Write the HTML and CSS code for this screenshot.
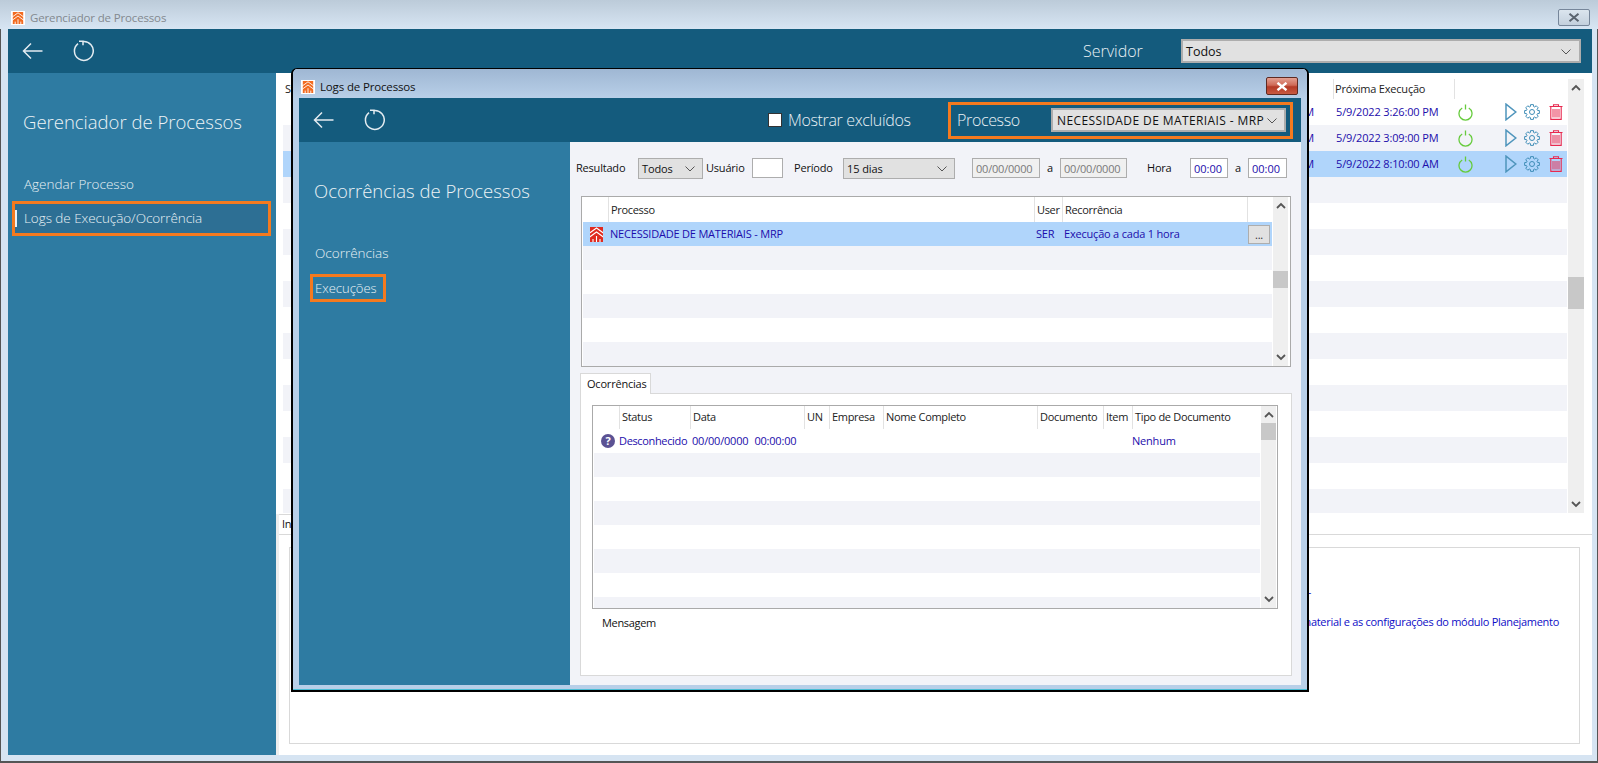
FILE: index.html
```html
<!DOCTYPE html>
<html lang="pt">
<head>
<meta charset="utf-8">
<title>Gerenciador de Processos</title>
<link rel="stylesheet" href="styles.css">
</head>
<body>
<svg class="defs" width="0" height="0" aria-hidden="true">
  <symbol id="logo" viewBox="0 0 13 15"><rect class="logo-bg" width="13" height="15"/><path class="logo-line" d="M-1 6.5L6.5 1L14 6.5M-1 10.5L6.5 5L14 10.5M6.5 9V15M3 12V15M10 12V15"/></symbol>
  <symbol id="back" viewBox="0 0 21 20"><path d="M20.5 10H1.5M9 2.5L1.5 10L9 17.5"/></symbol>
  <symbol id="reload" viewBox="0 0 22 22"><path d="M6 3.6A9.4 9.4 0 1 0 11 1.6M7 1.2H11V5.2"/></symbol>
  <symbol id="chev" viewBox="0 0 10 6"><path d="M.5 .5L5 5L9.5 .5"/></symbol>
  <symbol id="up" viewBox="0 0 10 7"><path d="M1 6L5 2L9 6"/></symbol>
  <symbol id="down" viewBox="0 0 10 7"><path d="M1 1L5 5L9 1"/></symbol>
  <symbol id="power" viewBox="0 0 15 17"><path d="M4.2 4A6.5 6.5 0 1 0 10.8 4M7.5 .5V5.5"/></symbol>
  <symbol id="play" viewBox="0 0 12 18"><path d="M1 1.2L10.8 9L1 16.8Z"/></symbol>
  <symbol id="gear" viewBox="0 0 16 16"><path d="M13.45 6.33L15.36 6.57V9.43L13.45 9.67L13.03 10.68L14.19 12.19L12.19 14.22L10.68 13.03L9.67 13.45L9.43 15.36H6.57L6.33 13.45L5.32 13.03L3.81 14.22L1.78 12.19L2.97 10.68L2.55 9.67L.64 9.43V6.57L2.55 6.33L2.97 5.32L1.78 3.81L3.81 1.78L5.32 2.97L6.33 2.55L6.57 .64H9.43L9.67 2.55L10.68 2.97L12.19 1.78L14.22 3.81L13.03 5.32ZM10.5 8A2.5 2.5 0 1 0 5.5 8A2.5 2.5 0 1 0 10.5 8Z"/></symbol>
  <symbol id="trash" viewBox="0 0 14 16"><rect class="trash-fill" x="3" y="5" width="8" height="8.5"/><path d="M.5 2.5H13.5M4.5 2.5V.7H9.5V2.5M1.8 2.5V15.4H12.2V2.5"/></symbol>
  <symbol id="x" viewBox="0 0 12 9"><path d="M1.5 .8L10.5 8.2M10.5 .8L1.5 8.2"/></symbol>
</svg>

<div class="win">
  <div class="titlebar">
    <svg class="app-icon"><use href="#logo"/></svg>
    <span class="title-muted">Gerenciador de Processos</span>
    <span class="close close-idle"><svg class="close-x"><use href="#x"/></svg></span>
  </div>
  <div class="topbar">
    <svg class="ic-back"><use href="#back"/></svg>
    <svg class="ic-reload"><use href="#reload"/></svg>
    <span class="bar-label servidor">Servidor</span>
    <div class="select select-server">Todos<svg class="chev"><use href="#chev"/></svg></div>
  </div>
  <div class="main">
    <nav class="side">
      <h1 class="side-title">Gerenciador de Processos</h1>
      <a class="nav-item">Agendar Processo</a>
      <a class="nav-item nav-active"><i class="nav-bar"></i>Logs de Execução/Ocorrência</a>
    </nav>
    <section class="content">
      <div class="sched">
        <div class="sched-table">
          <div class="sched-row sched-head">
            <span class="sc-first">Status</span>
            <span class="sc-next">Próxima Execução</span>
            <span class="sc-act"></span>
          </div>
          <div class="sched-row">
            <span class="sc-first sc-val">PM</span>
            <span class="sc-next sc-val">5/9/2022 3:26:00 PM</span>
            <span class="sc-act"><svg class="ic-power"><use href="#power"/></svg><svg class="ic-play"><use href="#play"/></svg><svg class="ic-gear"><use href="#gear"/></svg><svg class="ic-trash"><use href="#trash"/></svg></span>
          </div>
          <div class="sched-row alt">
            <span class="sc-first sc-val">PM</span>
            <span class="sc-next sc-val">5/9/2022 3:09:00 PM</span>
            <span class="sc-act"><svg class="ic-power"><use href="#power"/></svg><svg class="ic-play"><use href="#play"/></svg><svg class="ic-gear"><use href="#gear"/></svg><svg class="ic-trash"><use href="#trash"/></svg></span>
          </div>
          <div class="sched-row sel">
            <span class="sc-first sc-val">AM</span>
            <span class="sc-next sc-val">5/9/2022 8:10:00 AM</span>
            <span class="sc-act"><svg class="ic-power"><use href="#power"/></svg><svg class="ic-play"><use href="#play"/></svg><svg class="ic-gear"><use href="#gear"/></svg><svg class="ic-trash"><use href="#trash"/></svg></span>
          </div>
          <div class="sched-row alt"></div><div class="sched-row"></div>
          <div class="sched-row alt"></div><div class="sched-row"></div>
          <div class="sched-row alt"></div><div class="sched-row"></div>
          <div class="sched-row alt"></div><div class="sched-row"></div>
          <div class="sched-row alt"></div><div class="sched-row"></div>
          <div class="sched-row alt"></div><div class="sched-row"></div>
          <div class="sched-row alt"></div>
        </div>
        <div class="scroll scroll-sched">
          <svg class="sc-arrow"><use href="#up"/></svg>
          <i class="thumb thumb-sched"></i>
          <svg class="sc-arrow"><use href="#down"/></svg>
        </div>
      </div>
      <div class="info">
        <div class="info-tabs"><span class="info-tab">Informações</span></div>
        <div class="info-panel">
          <div class="info-box">
            <p class="info-line info-line-a">Necessidade de Materiais -</p>
            <p class="info-line info-line-b">Processo que calcula a necessidade de material e as configurações do módulo Planejamento</p>
          </div>
        </div>
      </div>
    </section>
  </div>
</div>

<div class="dialog">
  <div class="titlebar dialog-title">
    <svg class="app-icon"><use href="#logo"/></svg>
    <span>Logs de Processos</span>
    <span class="close close-red"><svg class="close-x"><use href="#x"/></svg></span>
  </div>
  <div class="topbar dialog-bar">
    <svg class="ic-back"><use href="#back"/></svg>
    <svg class="ic-reload"><use href="#reload"/></svg>
    <i class="checkbox"></i>
    <span class="bar-label excl">Mostrar excluídos</span>
    <div class="proc-box">
      <span class="bar-label">Processo</span>
      <div class="select select-proc">NECESSIDADE DE MATERIAIS - MRP<svg class="chev"><use href="#chev"/></svg></div>
    </div>
  </div>
  <div class="main">
    <nav class="side side-dialog">
      <h2 class="side-title">Ocorrências de Processos</h2>
      <a class="nav-item">Ocorrências</a>
      <a class="nav-item nav-boxed">Execuções</a>
    </nav>
    <section class="logs">
      <div class="filters">
        <span class="f-label w62">Resultado</span>
        <div class="select sel-sm w65">Todos<svg class="chev"><use href="#chev"/></svg></div>
        <span class="f-label ml3 w46">Usuário</span>
        <span class="field w31"></span>
        <span class="f-label ml11 w49">Período</span>
        <div class="select sel-sm w112">15 dias<svg class="chev"><use href="#chev"/></svg></div>
        <span class="field field-off ml17 w68">00/00/0000</span>
        <span class="f-label ml7 w13">a</span>
        <span class="field field-off w67">00/00/0000</span>
        <span class="f-label ml20 w43">Hora</span>
        <span class="field field-time w38">00:00</span>
        <span class="f-label ml7 w13">a</span>
        <span class="field field-time w39">00:00</span>
      </div>

      <div class="grid grid-proc">
        <div class="grid-table">
          <div class="grow ghead cols-proc">
            <span></span><span>Processo</span><span>User</span><span>Recorrência</span><span></span>
          </div>
          <div class="grow sel cols-proc">
            <span class="cell-icon"><svg class="ic-red"><use href="#logo"/></svg></span>
            <span>NECESSIDADE DE MATERIAIS - MRP</span><span>SER</span><span>Execução a cada 1 hora</span>
            <span class="cell-btn"><b class="dots">...</b></span>
          </div>
          <div class="grow alt"></div><div class="grow"></div>
          <div class="grow alt"></div><div class="grow"></div>
          <div class="grow alt"></div>
        </div>
        <div class="scroll">
          <svg class="sc-arrow"><use href="#up"/></svg>
          <i class="thumb thumb-proc"></i>
          <svg class="sc-arrow"><use href="#down"/></svg>
        </div>
      </div>

      <div class="tabs"><span class="tab">Ocorrências</span></div>
      <div class="tab-panel">
        <div class="grid grid-occ">
          <div class="grid-table">
            <div class="grow ghead ghead-occ cols-occ">
              <span></span><span>Status</span><span>Data</span><span>UN</span><span>Empresa</span><span>Nome Completo</span><span>Documento</span><span>Item</span><span>Tipo de Documento</span>
            </div>
            <div class="grow cols-occ">
              <span class="cell-icon"><b class="help">?</b></span>
              <span class="cell-status">Desconhecido</span>
              <span class="cell-date">00/00/0000<em class="time">00:00:00</em></span>
              <span></span><span></span><span></span><span></span><span></span>
              <span>Nenhum</span>
            </div>
            <div class="grow alt"></div><div class="grow"></div>
            <div class="grow alt"></div><div class="grow"></div>
            <div class="grow alt"></div><div class="grow"></div>
            <div class="grow alt"></div>
          </div>
          <div class="scroll">
            <svg class="sc-arrow"><use href="#up"/></svg>
            <i class="thumb thumb-occ"></i>
            <svg class="sc-arrow"><use href="#down"/></svg>
          </div>
        </div>
        <div class="msg">Mensagem</div>
      </div>
    </section>
  </div>
</div>
</body>
</html>
```
FILE: styles.css
```css
* { box-sizing: border-box; }
html, body { margin: 0; width: 1598px; height: 763px; overflow: hidden; }
body { position: relative; font: 11px/16px "Open Sans", "Liberation Sans", sans-serif; letter-spacing: -.2px; color: #111; background: #fff; }
p, h1, h2 { margin: 0; font-weight: 300; }
.defs { position: absolute; }

/* shared icon strokes */
.ic-back, .ic-reload { fill: none; stroke: #e4ecf1; stroke-width: 1.5; flex: none; }
.ic-back { width: 21px; height: 20px; margin-left: 14px; }
.ic-reload { width: 22px; height: 22px; margin-left: 29px; }
.chev { width: 10px; height: 6px; fill: none; stroke: #555; stroke-width: 1; margin-left: auto; flex: none; }

/* outer window */
.win { width: 1598px; height: 763px; display: flex; flex-direction: column; padding: 0 6px 8px 8px; position: relative;
  background: #d6e4f2; box-shadow: inset 1px 0 #555, inset -1px 0 #555, inset 0 -2px #555; }
.titlebar { height: 29px; flex: none; margin: 0 -6px 0 -8px; padding: 6px 8px 0 11px; display: flex; align-items: center;
  background: linear-gradient(#bccbd9, #d7e5f3); font-size: 11.5px; letter-spacing: -.15px; position: relative; }
.app-icon { width: 14px; height: 14px; margin-right: 5px; background: #fff; padding: 1px; color: #f26b21; flex: none; }
.logo-bg { fill: currentColor; }
.logo-line { fill: none; stroke: #fff; stroke-width: 1.1; }
.title-muted { color: #83898f; }
.close { margin-left: auto; display: flex; align-items: center; justify-content: center; width: 32px; height: 17px; border-radius: 2px; flex: none; }
.close-idle { background: linear-gradient(#dbe5ee, #c3d0dd); border: 1px solid #76869a; }
.close-red { background: linear-gradient(#e3a092 0, #cf6a57 45%, #b43a26 55%, #c85b42 100%); border: 1px solid #5e2a22; margin-right: 1px; margin-top: -2px; height: 18px; }
.close-x { width: 12px; height: 9px; fill: none; stroke: #fff; stroke-width: 2.4; }
.close-idle .close-x { stroke: #59636e; stroke-width: 2; }

.topbar { height: 44px; flex: none; background: #145b7d; display: flex; align-items: center; }
.bar-label { color: #e9f1f5; font-size: 16px; line-height: 22px; font-weight: 300; white-space: nowrap; letter-spacing: -.35px; }
.servidor { margin-left: auto; width: 98px; letter-spacing: 0; }
.select { background: #e1e1e1; border: 1px solid #adadad; display: flex; align-items: center; font-size: 12.5px; letter-spacing: 0; color: #111; white-space: nowrap; }
.select-server { width: 400px; height: 24px; padding: 1px 8px 0 3px; margin-right: 11px; border-width: 2px; }

.main { flex: 1; display: flex; min-height: 0; }
.side { width: 268px; flex: none; background: #2e7ba2; padding-top: 36px; color: #e9f1f5; }
.side-title { font-size: 18.5px; line-height: 26px; letter-spacing: 0; margin: 0 0 39px 15px; color: #edf3f6; white-space: nowrap; }
.nav-item { display: flex; align-items: center; height: 20px; padding-left: 16px; font-size: 13.5px; line-height: 20px; letter-spacing: 0; font-weight: 300; white-space: nowrap; }
.nav-active { height: 35px; width: 259px; margin: 7px 0 0 4px; padding: 0 0 1px; border: 3px solid #f47a1f; background: #2d6f94; letter-spacing: -.06px; }
.nav-bar { width: 2px; height: 17px; background: #e9f1f5; margin-right: 7px; }

/* schedule list */
.content { flex: 1; background: #fff; display: flex; flex-direction: column; padding-top: 6px; min-width: 0; }
.sched { height: 434px; flex: none; display: flex; margin: 0 8px 0 7px; }
.sched-table { flex: 1; height: 434px; overflow: hidden; }
.sched-row { height: 26px; display: grid; grid-template-columns: 1050px 121px 113px; align-items: center; }
.sched-head { height: 20px; color: #222; }
.sched-head .sc-next, .sched-head .sc-act { border-left: 1px solid #e2e2e2; height: 20px; line-height: 20px; padding-left: 1px; }
.sc-first { padding-left: 2px; }
.sc-val { color: #1c0dab; white-space: nowrap; letter-spacing: -.15px; }
.sc-first.sc-val { text-align: right; padding-right: 19px; }
.sc-next.sc-val { padding-left: 3px; }
.sc-act { display: flex; align-items: center; }
.alt { background: #f2f3f8; }
.sel { background: #b0d5fb; }
.ic-power { width: 15px; height: 17px; margin-left: 4px; fill: none; stroke: #66cb3c; stroke-width: 1.3; }
.ic-play { width: 12px; height: 18px; margin-left: 32px; fill: none; stroke: #4f95bc; stroke-width: 1.5; }
.ic-gear { width: 16px; height: 16px; margin-left: 7px; fill: none; stroke: #3f8db7; stroke-width: 1; }
.ic-trash { width: 14px; height: 16px; margin-left: 9px; fill: none; stroke: #e8294f; stroke-width: 1.1; }
.trash-fill { fill: #e8294f; fill-opacity: .5; stroke: none; }

.scroll { width: 15px; flex: none; background: #efefef; margin-left: 1px; display: flex; flex-direction: column; align-items: center; }
.scroll-sched { width: 16px; }
.sc-arrow { width: 10px; height: 7px; fill: none; stroke: #555; stroke-width: 1.8; margin: 5px 0 4px; flex: none; }
.thumb { display: block; width: 100%; flex: none; background: #c8c8c8; }
.scroll .sc-arrow:last-child { margin: auto 0 5px; }
.thumb-sched { height: 32px; margin-top: 182px; }
.thumb-proc { height: 17px; margin-top: 58px; }
.thumb-occ { height: 17px; margin-top: 1px; }

/* lower information panel */
.info { flex: 1; display: flex; flex-direction: column; margin-top: 1px; border-left: 3px solid #eee; min-height: 0; }
.info-tabs { height: 21px; flex: none; border-bottom: 1px solid #d9d9d9; }
.info-tab { display: block; width: 100px; height: 20px; border-top: 1px solid #d9d9d9; padding-left: 3px; line-height: 17px; }
.info-panel { flex: 1; padding: 12px 12px 11px 10px; min-height: 0; }
.info-box { height: 100%; border: 1px solid #d9d9d9; padding-top: 36px; color: #0d0dc6; }
.info-line { font-weight: 400; text-align: right; white-space: nowrap; line-height: 16px; letter-spacing: -.3px; }
.info-line-a { padding-right: 268px; }
.info-line-b { padding-right: 20px; margin-top: 14px; }

/* dialog window floating over the main window */
.dialog { position: absolute; left: 291px; top: 68px; width: 1018px; height: 624px; display: flex; flex-direction: column;
  padding: 0 6px 5px; border: 2px solid #000; border-top-width: 1px; border-radius: 6px 6px 0 0;
  background: #b8cfe8; box-shadow: inset 0 -1px #49bcd4; }
.dialog-title { margin: 0 -6px; padding: 7px 8px 0 8px; background: linear-gradient(#9fb7d3, #b8cfe8); border-radius: 5px 5px 0 0; color: #111; }
.checkbox { width: 14px; height: 14px; background: #fff; border: 1px solid #333; margin-left: 383px; margin-right: 6px; flex: none; }
.excl { width: 160px; }
.proc-box { width: 345px; height: 37px; border: 3px solid #f47a1f; display: flex; align-items: center; padding: 0 4px 0 6px; flex: none; }
.proc-box .bar-label { width: 94px; flex: none; }
.select-proc { flex: 1; height: 24px; padding: 1px 7px 0 4px; font-size: 12px; letter-spacing: .4px; border-width: 2px; }
.side-dialog { width: 271px; padding-top: 36px; }
.side-dialog .side-title { margin-bottom: 39px; }
.nav-boxed { height: 28px; width: 76px; margin: 11px 0 0 11px; padding: 0 0 1px 2px; border: 3px solid #f47a1f; font-size: 13px; }

.logs { flex: 1; background: #f2f3f8; padding-top: 16px; display: flex; flex-direction: column; min-width: 0; }
.filters { height: 21px; flex: none; display: flex; align-items: flex-start; padding-left: 6px; }
.f-label { line-height: 20px; white-space: nowrap; flex: none; }
.sel-sm { height: 21px; padding: 1px 7px 0 3px; flex: none; font-size: 11px; letter-spacing: -.1px; }
.field { height: 20px; background: #fff; border: 1px solid #adadad; flex: none; line-height: 19px; white-space: nowrap; padding-left: 3px; color: #1c0dab; }
.field-off { background: #f0f0f0; color: #7a7a7a; }
.field-time { padding-left: 3px; letter-spacing: 0; }
.w13 { width: 13px; } .w31 { width: 31px; } .w38 { width: 38px; } .w39 { width: 39px; } .w43 { width: 43px; } .w46 { width: 46px; }
.w49 { width: 49px; } .w62 { width: 62px; } .w65 { width: 65px; } .w67 { width: 67px; } .w68 { width: 68px; } .w112 { width: 112px; }
.ml3 { margin-left: 3px; } .ml7 { margin-left: 7px; } .ml11 { margin-left: 11px; } .ml17 { margin-left: 17px; } .ml20 { margin-left: 20px; }

.grid { display: flex; border: 1px solid #aaa; background: #fff; flex: none; }
.grid-proc { width: 710px; height: 171px; margin: 17px 0 0 11px; padding: 0 2px 0 1px; }
.grid-occ { width: 686px; height: 204px; padding: 0 1px 0 1px; }
.grid-table { flex: 1; overflow: hidden; min-width: 0; }
.grow { height: 24px; display: grid; align-items: center; color: #1c0dab; white-space: nowrap; }
.grow > span { padding-left: 2px; min-width: 0; }
.ghead { height: 25px; color: #222; letter-spacing: -.32px; }
.ghead-occ { height: 23px; }
.ghead > span { height: 100%; line-height: 25px; border-left: 1px solid #e2e2e2; padding-left: 2px; }
.ghead-occ > span { line-height: 22px; }
.ghead > span:first-child { border-left: 0; }
.cols-proc { grid-template-columns: 25px 426px 28px 185px 25px; }
.cols-occ { grid-template-columns: 25px 71px 114px 25px 54px 154px 66px 29px 129px; }
.cols-occ:not(.ghead) > span { padding-left: 0; }
.cell-icon { display: flex; align-items: center; padding-left: 7px !important; }
.ic-red { width: 13px; height: 15px; color: #e02b20; }
.cell-btn { padding-left: 1px !important; }
.dots { display: block; width: 22px; height: 19px; background: #e1e1e1; border: 1px solid #adadad; font-weight: 400; text-align: center; line-height: 18px; color: #333; }
.help { display: block; width: 14px; height: 14px; border-radius: 50%; background: #5b5293; color: #fff; text-align: center; font-size: 11px; line-height: 14px; }
.cell-status { letter-spacing: -.35px; }
.time { font-style: normal; margin-left: 6px; }
.cell-date { padding-left: 2px !important; overflow: visible; }

.tabs { height: 21px; flex: none; margin: 6px 0 0 10px; position: relative; z-index: 1; }
.tab { display: block; width: 71px; height: 21px; background: #fff; border: 1px solid #d9d9d9; border-bottom: 0; line-height: 19px; padding-left: 6px; }
.tab-panel { width: 712px; height: 283px; margin: -1px 0 0 10px; background: #fff; border: 1px solid #d9d9d9; padding: 11px 0 0 11px; flex: none; }
.msg { margin: 6px 0 0 10px; line-height: 16px; letter-spacing: -.32px; }
```
